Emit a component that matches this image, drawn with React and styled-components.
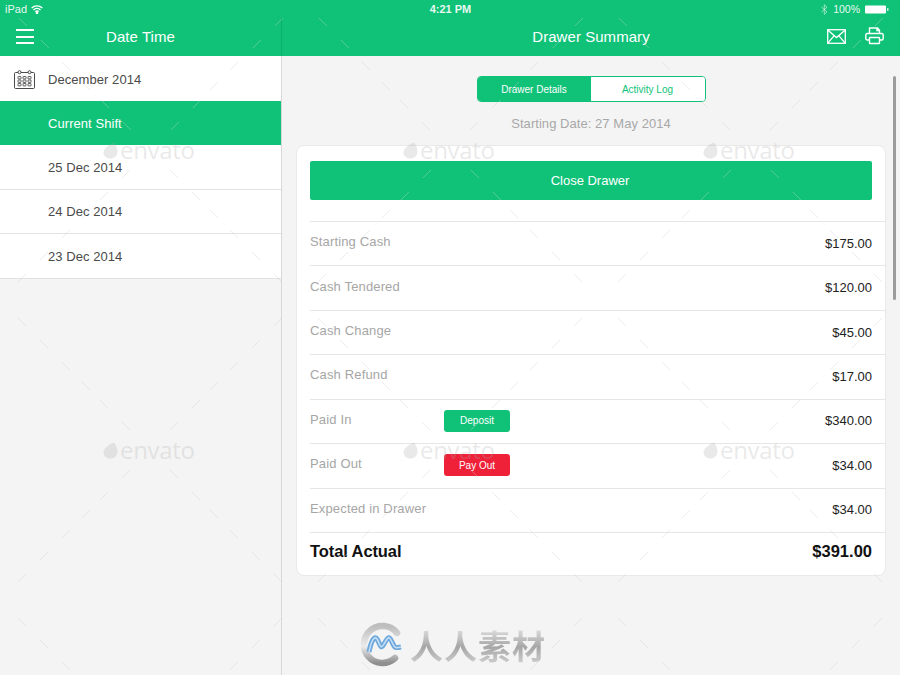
import React from "react";
import styled, { createGlobalStyle } from "styled-components";

const GREEN = "#10c278";
const Global = createGlobalStyle`
  html, body { margin: 0; padding: 0; background: #f4f4f4; }
  body { font-family: "Liberation Sans", Arial, sans-serif; }
  * { box-sizing: border-box; }
`;
const Page = styled.div`
  position: relative; width: 900px; height: 675px; overflow: hidden;
  display: flex; flex-direction: column; background: #f4f4f4;
`;
const TopBar = styled.header`background: ${GREEN}; color: #fff; height: 56px; display: flex; flex-direction: column; flex: none;`;
const StatusBar = styled.div`
  height: 18px; padding: 0 5px; display: grid; grid-template-columns: 1fr auto 1fr; align-items: center;
  font-size: 11px; line-height: 18px; color: rgba(255,255,255,.92);
`;
const StatusSide = styled.div`
  display: flex; align-items: center; gap: ${p => p.$gap || 4}px; justify-content: ${p => p.$end ? "flex-end" : "flex-start"};
  padding-right: ${p => p.$end ? 6 : 0}px;
`;
const BatteryText = styled.span`font-size: 10.5px;`;
const StatusTime = styled.div`font-weight: 700; font-size: 11px; padding-left: 1px;`;
const Nav = styled.div`flex: 1; display: flex;`;
const NavLeft = styled.div`
  width: 282px; flex: none; border-right: 1px solid #0eae6c; display: flex; align-items: center;
  position: relative; justify-content: center; padding-bottom: 1px;
`;
const NavTitle = styled.div`font-size: 15px; line-height: 36px; letter-spacing: .05px;`;
const MenuSlot = styled.button`
  position: absolute; left: 16px; top: 11px; width: 18px; height: 15px; padding: 0; border: 0; background: none;
  display: flex; flex-direction: column; justify-content: space-between;
  span { display: block; height: 2px; background: #fff; }
`;
const NavRight = styled.div`flex: 1; display: flex; align-items: center; justify-content: center; position: relative;`;
const NavActions = styled.div`position: absolute; right: 16px; top: 9px; display: flex; gap: 19px; align-items: center;`;
const Body = styled.div`flex: 1; display: flex; min-height: 0;`;
const Sidebar = styled.aside`width: 282px; flex: none; border-right: 1px solid #d8d8d8;`;
const SideRow = styled.div`
  height: ${p => p.$h || 44.4}px; display: flex; align-items: center; padding-left: ${p => p.$icon ? 14 : 48}px; gap: 13px;
  padding-top: ${p => p.$active ? 0 : 1}px;
  font-size: 13px; letter-spacing: .06px; color: ${p => p.$active ? "#fff" : "#4a4a4a"};
  background: ${p => p.$active ? GREEN : "#fff"};
  border-bottom: ${p => p.$line ? "1px solid #e2e2e2" : "none"};
`;
const Main = styled.main`flex: 1; display: flex; flex-direction: column; align-items: center; padding: 20px 14px 0;`;
const Segments = styled.div`
  width: 229px; height: 26px; display: flex; border: 1.5px solid ${GREEN}; border-radius: 4px; overflow: hidden; font-size: 10px; flex: none;
`;
const Segment = styled.div`
  flex: ${p => p.$w}; display: flex; align-items: center; justify-content: center;
  background: ${p => p.$on ? GREEN : "#fff"}; color: ${p => p.$on ? "#fff" : GREEN};
`;
const StartDate = styled.div`font-size: 13px; color: #a8a8a8; margin-top: 13px; line-height: 18px; letter-spacing: .05px;`;
const Card = styled.section`
  width: 590px; height: 431px; margin-top: 12px; background: #fff; border: 1px solid #e9e9e9; border-radius: 8px;
  padding: 15px 0 0 13px; flex: none;
`;
const CloseButton = styled.button`
  width: 562px; height: 39px; display: block; border: 0; border-radius: 2px; background: ${GREEN}; color: #fff;
  font: 13px "Liberation Sans", Arial, sans-serif; margin-bottom: 21px; padding: 0 2px 0 0;
`;
const Row = styled.div`
  height: 44.43px; border-top: 1px solid #e6e6e6; padding-right: 13px; display: grid;
  grid-template-columns: 134px 66px 1fr; align-items: center;
`;
const Label = styled.div`font-size: 13px; color: #a6a6a6; letter-spacing: .15px; margin-top: -4px;`;
const Value = styled.div`grid-column: 3; justify-self: end; font-size: 13px; color: #222; margin-top: -1px;`;
const Pill = styled.div`
  width: 66px; height: 22px; border-radius: 3px; background: ${p => p.$bg}; color: #fff; font-size: 10px;
  display: flex; align-items: center; justify-content: center; margin-top: -1px;
`;
const TotalLabel = styled.div`font-size: 16.500px; font-weight: 700; color: #111; margin-top: -7px; letter-spacing: -.1px;`;
const TotalValue = styled.div`grid-column: 3; justify-self: end; font-size: 16.500px; font-weight: 700; color: #111; margin-top: -7px;`;
const Scroll = styled.div`position: absolute; left: 893px; top: 76px; width: 3px; height: 224px; background: #9c9c9c; border-radius: 2px;`;
const Watermarks = styled.div`
  position: absolute; inset: 0; pointer-events: none; display: grid; grid-template-columns: repeat(3, 300px); grid-auto-rows: 300px;
`;
const Tile = styled.div`position: relative; width: 300px; height: 300px;`;
const TileMarks = styled.svg`position: absolute; inset: 0;`;
const EnvatoMark = styled.div`
  position: absolute; left: 103px; top: 137px; display: flex; align-items: center; gap: 2px;
  font: 24px/26px "Open Sans", sans-serif; color: rgba(170,170,170,.26); letter-spacing: -.3px;
`;
const Brand = styled.div`position: absolute; left: 359px; top: 622px; display: flex; align-items: center; gap: 6px;`;
const BrandText = styled.div`
  font: 700 33px/42px "Noto Sans CJK SC", sans-serif; letter-spacing: 1px;
  background: linear-gradient(#ededed, #a6a6a6 55%, #d4d4d4); -webkit-background-clip: text; background-clip: text; color: transparent;
`;

const Wifi = () => (
  <svg width="12" height="9" viewBox="0 0 12 9" fill="none" stroke="#fff" strokeWidth="1.4">
    <path d="M.7 3A7.6 7.6 0 0 1 11.3 3M2.5 4.9a5 5 0 0 1 7 0M4.3 6.7a2.4 2.4 0 0 1 3.4 0" />
    <circle cx="6" cy="8" r=".6" fill="#fff" />
  </svg>
);
const Bluetooth = () => (
  <svg width="7" height="11" viewBox="0 0 7 11" fill="none" stroke="rgba(255,255,255,.55)" strokeWidth="1">
    <path d="M.5 3 6 7.7 3.3 10.3V.7L6 3.3.5 8" />
  </svg>
);
const Battery = () => (
  <svg width="24" height="9" viewBox="0 0 24 9"><rect x="0" y="0.5" width="21" height="8" rx="1" fill="#fff" /><rect x="22" y="3" width="1.5" height="3" fill="rgba(255,255,255,.7)" /></svg>
);
const Mail = () => (
  <svg width="19" height="15" viewBox="0 0 19 15" fill="none" stroke="#fff" strokeWidth="1.3">
    <rect x=".7" y=".7" width="17.6" height="13.6" />
    <path d="M.7.9 9.5 8.6 18.3.9M.9 14.1 7 6.9M18.1 14.1 12 6.9" />
  </svg>
);
const Printer = () => (
  <svg width="19" height="18" viewBox="0 0 19 18" fill="none" stroke="#fff" strokeWidth="1.4">
    <path d="M4.5 6.5V1h8l2 2.2v3.3M12 1v2.5h2.5" />
    <rect x=".8" y="6.5" width="17.4" height="6.5" rx="1.5" />
    <rect x="4.5" y="10.5" width="10" height="6" rx=".5" fill={GREEN} />
  </svg>
);
const CalendarIcon = () => (
  <svg width="21" height="19" viewBox="0 0 21 19" fill="none" stroke="#4a4a4a">
    <path d="M4 2.5H1.5a1 1 0 0 0-1 1v14a1 1 0 0 0 1 1h18a1 1 0 0 0 1-1v-14a1 1 0 0 0-1-1H17M7 2.5h7" />
    <rect x="4" y=".7" width="3" height="3" rx="1.5" /><rect x="14" y=".7" width="3" height="3" rx="1.5" />
    {[4, 9, 14].map(x => [6.5, 10, 13.5].map(y => <rect key={x + "-" + y} x={x} y={y} width="3" height="2.4" rx=".4" strokeWidth=".9" />))}
  </svg>
);
const dashes = [20, 42, 60, 80, 102, 124];
const TileArt = () => (
  <TileMarks width="300" height="300" viewBox="0 0 300 300">
    {dashes.flatMap(d => [[-1, -1], [1, -1], [-1, 1], [1, 1]].map(([a, b]) => (
      <g key={d + "" + a + b}>
        <line x1={150 + a * d} y1={150 + b * d} x2={150 + a * (d + 8)} y2={150 + b * (d + 8)} stroke="rgba(150,150,150,.17)" strokeWidth="1" />
        <line x1={151 + a * d} y1={150 + b * d} x2={151 + a * (d + 8)} y2={150 + b * (d + 8)} stroke="rgba(255,255,255,.22)" strokeWidth="1" />
      </g>
    )))}
  </TileMarks>
);
const Drop = () => (
  <svg width="15" height="17" viewBox="0 0 15 17"><path d="M11 .5C13 3 14.500 6 14.500 9.500 14.500 14 11 16.500 7.500 16.500 3.500 16.500.5 14 .5 10.500.5 6.500 6 2.500 11 .5Z" fill="rgba(170,170,170,.26)" /></svg>
);
const CmLogo = () => (
  <svg width="45" height="45" viewBox="0 0 45 45" fill="none">
    <defs>
      <linearGradient id="ring" x1="0" y1="0" x2="0" y2="1"><stop offset="0" stopColor="#bdbdbd" /><stop offset=".55" stopColor="#ececec" /><stop offset="1" stopColor="#8f8f8f" /></linearGradient>
    </defs>
    <path d="M38 11A18.500 18.500 0 1 0 36 36" stroke="url(#ring)" strokeWidth="6.500" strokeLinecap="round" />
    <path d="M10 30C12 20 15 13 18 17S21 29 25 22 30 13 33 20 37 26 42 25" stroke="#6ea8dc" strokeWidth="5" />
    <path d="M10 30C12 20 15 13 18 17S21 29 25 22 30 13 33 20 37 26 42 25" stroke="#c7e0f5" strokeWidth="1.500" />
  </svg>
);

const rows = [
  ["Starting Cash", "$175.00"], ["Cash Tendered", "$120.00"], ["Cash Change", "$45.00"], ["Cash Refund", "$17.00"],
  ["Paid In", "$340.00", "Deposit", GREEN], ["Paid Out", "$34.00", "Pay Out", "#ee2139"], ["Expected in Drawer", "$34.00"],
];

export default function App() {
  return (
    <Page>
      <Global />
      <TopBar>
        <StatusBar>
          <StatusSide><span>iPad</span><Wifi /></StatusSide>
          <StatusTime>4:21 PM</StatusTime>
          <StatusSide $end $gap={5}><Bluetooth /><BatteryText>100%</BatteryText><Battery /></StatusSide>
        </StatusBar>
        <Nav>
          <NavLeft><MenuSlot><span /><span /><span /></MenuSlot><NavTitle>Date Time</NavTitle></NavLeft>
          <NavRight>
            <NavTitle>Drawer Summary</NavTitle>
            <NavActions><Mail /><Printer /></NavActions>
          </NavRight>
        </Nav>
      </TopBar>
      <Body>
        <Sidebar>
          <SideRow $icon $h={45}><CalendarIcon /><span>December 2014</span></SideRow>
          <SideRow $active>Current Shift</SideRow>
          <SideRow $line>25 Dec 2014</SideRow>
          <SideRow $line>24 Dec 2014</SideRow>
          <SideRow $line>23 Dec 2014</SideRow>
        </Sidebar>
        <Main>
          <Segments><Segment $on $w={114}>Drawer Details</Segment><Segment $w={115}>Activity Log</Segment></Segments>
          <StartDate>Starting Date: 27 May 2014</StartDate>
          <Card>
            <CloseButton>Close Drawer</CloseButton>
            {rows.map(([l, v, pill, bg]) => (
              <Row key={l}>
                <Label>{l}</Label>
                {pill && <Pill $bg={bg}>{pill}</Pill>}
                <Value>{v}</Value>
              </Row>
            ))}
            <Row><TotalLabel>Total Actual</TotalLabel><TotalValue>$391.00</TotalValue></Row>
          </Card>
        </Main>
      </Body>
      <Scroll />
      <Watermarks>
        {Array.from({ length: 9 }, (_, i) => (
          <Tile key={i}><TileArt />{i < 6 && <EnvatoMark><Drop />envato</EnvatoMark>}</Tile>
        ))}
      </Watermarks>
      <Brand><CmLogo /><BrandText>人人素材</BrandText></Brand>
    </Page>
  );
}
